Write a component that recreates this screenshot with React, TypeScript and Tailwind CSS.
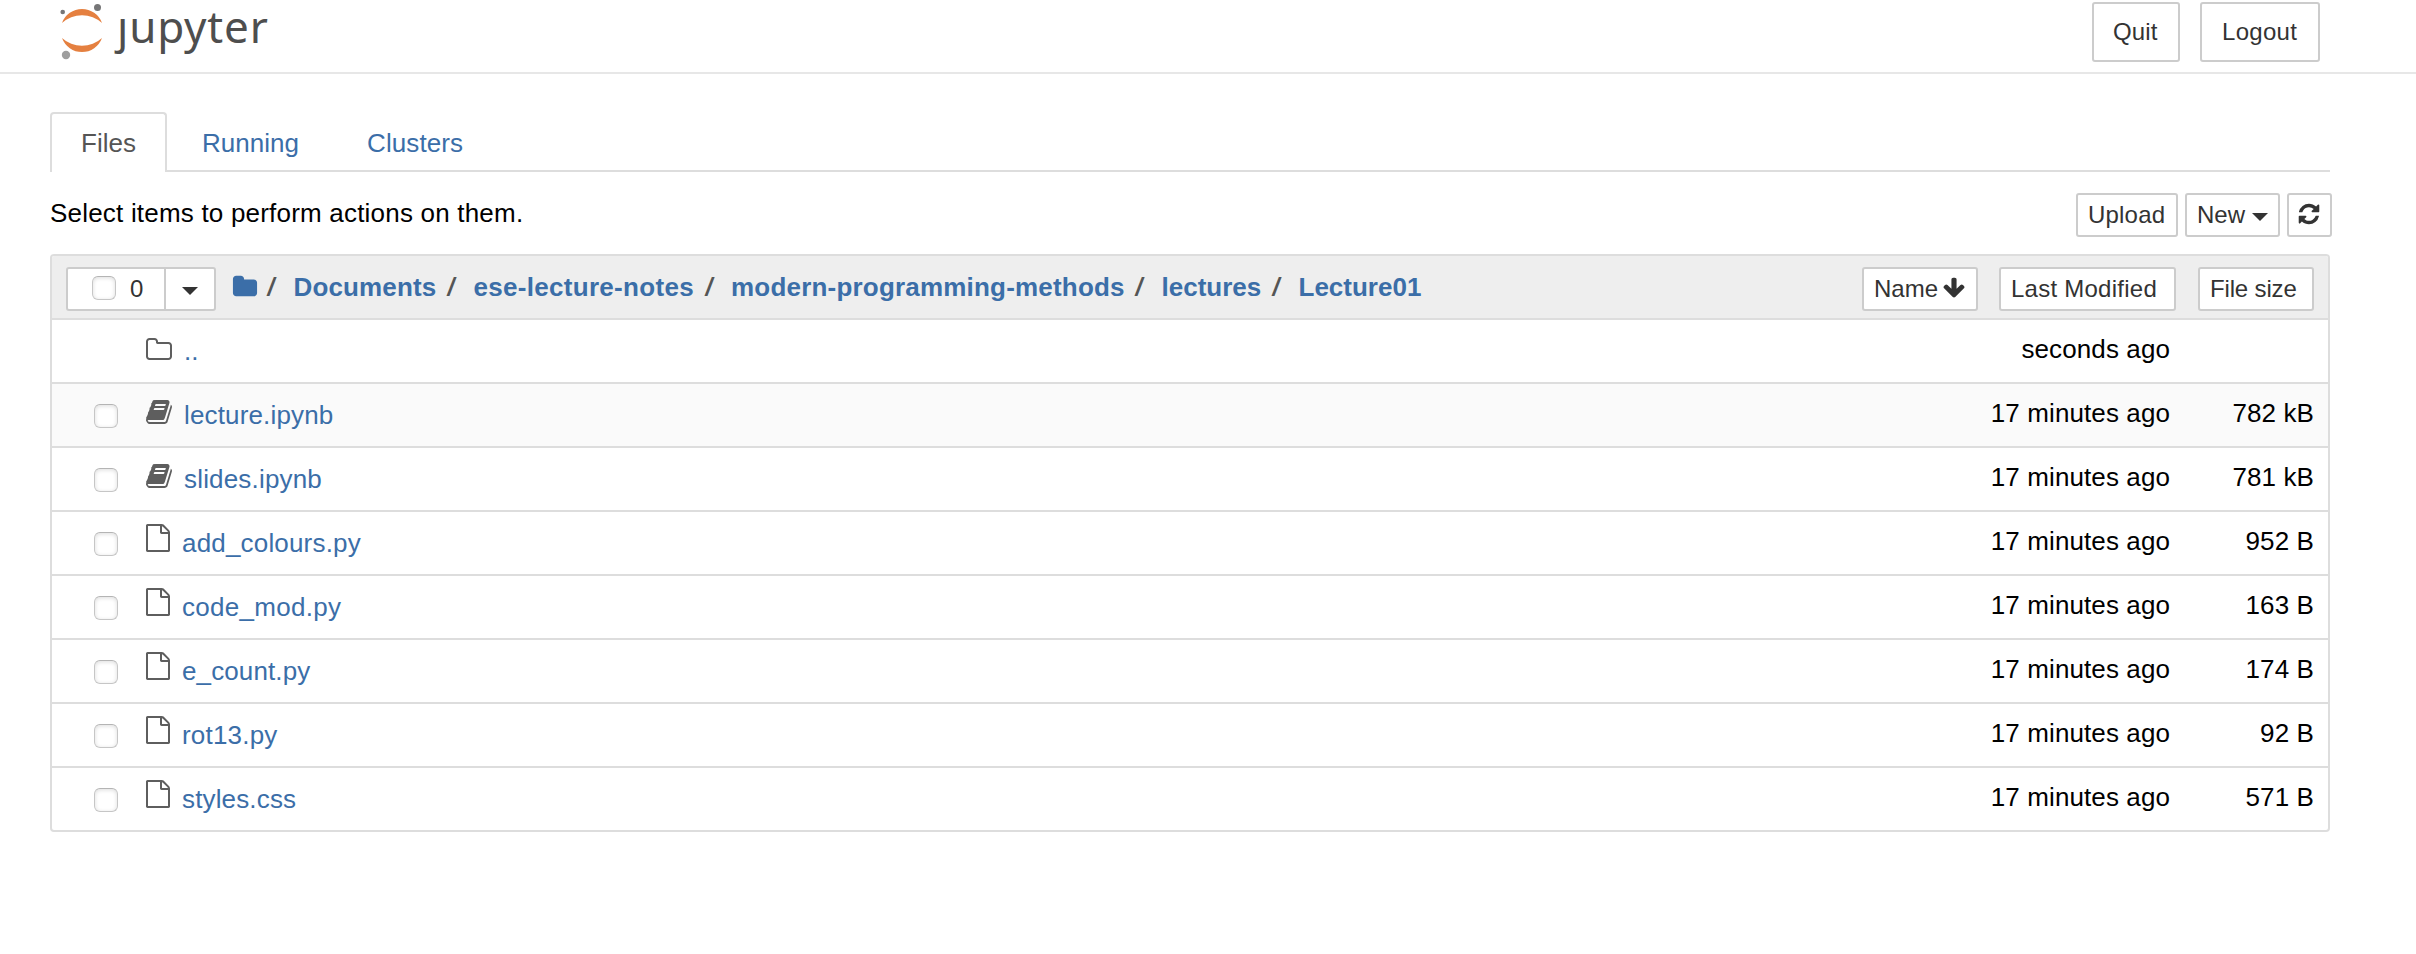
import type { ReactNode } from "react";

const ICONS = {
  folderOpen:
    "M1600 1312v-704q0-40-28-68t-68-28h-704q-40 0-68-28t-28-68v-64q0-40-28-68t-68-28h-320q-40 0-68 28t-28 68v960q0 40 28 68t68 28h1216q40 0 68-28t28-68zm128-704v704q0 92-66 158t-158 66h-1216q-92 0-158-66t-66-158v-960q0-92 66-158t158-66h320q92 0 158 66t66 158v32h672q92 0 158 66t66 158z",
  folder:
    "M1728 608v704q0 92-66 158t-158 66h-1216q-92 0-158-66t-66-158v-960q0-92 66-158t158-66h320q92 0 158 66t66 158v32h672q92 0 158 66t66 158z",
  refresh:
    "M1639 1056q0 5-1 7-64 268-268 434.5t-478 166.5q-146 0-282.5-55t-243.5-157l-129 129q-19 19-45 19t-45-19-19-45v-448q0-26 19-45t45-19h448q26 0 45 19t19 45-19 45l-137 137q71 66 161 102t187 36q134 0 250-65t186-179q11-17 53-117 8-23 30-23h192q13 0 22.5 9.5t9.5 22.5zm25-800v448q0 26-19 45t-45 19h-448q-26 0-45-19t-19-45 19-45l138-138q-148-137-349-137-134 0-250 65t-186 179q-11 17-53 117-8 23-30 23h-199q-13 0-22.5-9.5t-9.5-22.5v-7q65-268 270-434.5t480-166.5q146 0 284 55.5t245 156.5l130-129q19-19 45-19t45 19 19 45z",
  arrowDown:
    "M1675 832q0 53-37 90l-651 652q-39 37-91 37-53 0-90-37l-651-652q-38-36-38-90 0-53 38-91l74-75q39-37 91-37 53 0 90 37l294 294v-704q0-52 38-90t90-38h128q52 0 90 38t38 90v704l294-294q37-37 90-37 52 0 91 37l75 75q37 39 37 91z",
  file: "M1596 380q28 28 48 76t20 88v1152q0 40-28 68t-68 28h-1344q-40 0-68-28t-28-68v-1600q0-40 28-68t68-28h896q40 0 88 20t76 48zm-444-244v376h376q-10-29-22-41l-313-313q-12-12-41-22zm384 1528v-1024h-416q-40 0-68-28t-28-68v-416h-768v1536h1280z",
  book: "M1703 478q40 57 18 129l-275 906q-19 64-76.5 107.5t-122.5 43.5h-923q-77 0-148.5-53.5t-99.5-131.5q-24-67-2-127 0-4 3-27t4-37q1-8-3-21.5t-3-19.5q2-11 8-21t16.5-23.5 16.5-23.5q23-38 45-91.5t30-91.5q3-10 .5-30t-.5-28q3-11 17-28t17-23q21-36 42-92t25-90q1-9-2.5-32t.5-28q4-13 22-30.5t22-22.5q19-26 42.5-84.5t27.5-96.5q1-8-3-25.5t-2-26.5q2-8 9-18t18-23 17-21q8-12 16.5-30.5t15-35 16-36 19.5-32 26.5-23.5 36-11.5 47.5 5.5l-1 3q38-9 51-9h761q74 0 114 56t18 130l-274 906q-36 119-71.5 153.5t-128.5 34.5h-869q-27 0-38 15-11 16-1 43 24 70 144 70h923q29 0 56-15.5t35-41.5l300-987q7-22 5-57 38 15 59 43zm-1064 2q-4 13 2 22.5t20 9.5h608q13 0 25.5-9.5t16.5-22.5l21-64q4-13-2-22.5t-20-9.5h-608q-13 0-25.5 9.5t-16.5 22.5zm-83 256q-4 13 2 22.5t20 9.5h608q13 0 25.5-9.5t16.5-22.5l21-64q4-13-2-22.5t-20-9.5h-608q-13 0-25.5 9.5t-16.5 22.5z",
};

function Icon({ name, className }: { name: keyof typeof ICONS; className: string }) {
  return (
    <svg viewBox="0 0 1792 1792" fill="currentColor" className={`block shrink-0 ${className}`}>
      <path d={ICONS[name]} />
    </svg>
  );
}

function Caret({ className }: { className: string }) {
  return (
    <svg viewBox="0 0 16 8" fill="currentColor" className={`block h-2 w-4 shrink-0 ${className}`}>
      <path d="M0 0h16L8 8z" />
    </svg>
  );
}

function Checkbox({ className }: { className: string }) {
  return (
    <span
      className={`block size-6 shrink-0 rounded-[6px] border border-[#c6c6c6] border-t-[#b4b4b4] bg-white shadow-[inset_0_1px_4px_rgba(0,0,0,0.14)] ${className}`}
    />
  );
}

function Button({ className, children }: { className: string; children: ReactNode }) {
  return (
    <button
      className={`flex shrink-0 rounded-[3px] border-2 border-[#ccc] bg-white text-left text-[24px] whitespace-nowrap text-[#333] ${className}`}
    >
      {children}
    </button>
  );
}

const CRUMBS = [
  { label: "Documents", className: "w-[144.5px] tracking-[0.15px]" },
  { label: "ese-lecture-notes", className: "w-[222px] tracking-[0.3px]" },
  { label: "modern-programming-methods", className: "w-[395px] tracking-[0.2px]" },
  { label: "lectures", className: "w-[101.5px]" },
  { label: "Lecture01", className: "w-[130px]" },
];

type Row = { kind: "up" | "book" | "file"; name: string; tracking: string; age: string; size: string };

const AGE = "17 minutes ago";
const ROWS: Row[] = [
  { kind: "up", name: "..", tracking: "", age: "seconds ago", size: "" },
  { kind: "book", name: "lecture.ipynb", tracking: "tracking-[0.15px]", age: AGE, size: "782 kB" },
  { kind: "book", name: "slides.ipynb", tracking: "tracking-[0.18px]", age: AGE, size: "781 kB" },
  { kind: "file", name: "add_colours.py", tracking: "tracking-[0.18px]", age: AGE, size: "952 B" },
  { kind: "file", name: "code_mod.py", tracking: "tracking-[0.28px]", age: AGE, size: "163 B" },
  { kind: "file", name: "e_count.py", tracking: "tracking-[0.12px]", age: AGE, size: "174 B" },
  { kind: "file", name: "rot13.py", tracking: "tracking-[0.2px]", age: AGE, size: "92 B" },
  { kind: "file", name: "styles.css", tracking: "tracking-[0.15px]", age: AGE, size: "571 B" },
];

function FileRow({ row }: { row: Row }) {
  return (
    <li
      className={`flex h-16 items-start border-t-2 border-[#ddd] pr-[14px] text-[26px] ${row.name === "lecture.ipynb" ? "bg-[#fafafa]" : ""}`}
    >
      <div className="w-[92px] shrink-0 pt-5 pl-[42px]">{row.kind !== "up" && <Checkbox className="" />}</div>
      <div className="flex w-10 shrink-0 text-[#5e5e5e]">
        {row.kind === "up" && <Icon name="folderOpen" className="mt-4 ml-px size-7" />}
        {row.kind === "book" && <Icon name="book" className="mt-3.5 ml-px size-7" />}
        {row.kind === "file" && <Icon name="file" className="mt-3 size-7" />}
      </div>
      <a className={`grow leading-[63px] text-[#3b6ea8] ${row.kind === "file" ? "-ml-[2px]" : ""} ${row.tracking}`}>
        {row.name}
      </a>
      <span className="leading-[58px] tracking-[0.1px] text-black">{row.age}</span>
      <span className="w-36 text-right leading-[58px] tracking-[0.1px] text-black">{row.size}</span>
    </li>
  );
}

export default function App() {
  return (
    <div className="flex h-[954px] w-[2416px] flex-col overflow-hidden bg-white font-['Liberation_Sans',Arial,sans-serif]">
      <header className="flex h-[74px] shrink-0 items-start border-b-2 border-[#e7e7e7] pr-24 pl-[58px]">
        <svg viewBox="0 0 48 64" className="block h-16 w-12 shrink-0">
          <path d="M4 23A21.300 21.300 0 0 1 44 23A29.500 29.500 0 0 0 4 23z" fill="#e58040" />
          <path d="M4 38A21.300 21.300 0 0 0 44 38A29.500 29.500 0 0 1 4 38z" fill="#e58040" />
          <circle cx="39.500" cy="7.500" r="3.500" fill="#767677" />
          <circle cx="4.700" cy="12" r="2.300" fill="#767677" />
          <circle cx="8" cy="55" r="4.200" fill="#9e9e9e" />
        </svg>
        <span className="ml-[11px] grow text-[44px] leading-[52px] tracking-[0.8px] text-[#4e4e4e] font-['Noto_Sans',sans-serif]">
          ȷupyter
        </span>
        <div className="flex gap-5 pt-0.5">
          <Button className="h-[60px] w-22 pl-[19px] leading-[56px] tracking-[0.1px]">Quit</Button>
          <Button className="h-[60px] w-[120px] pl-[20px] leading-[56px] tracking-[0.3px]">Logout</Button>
        </div>
      </header>

      <main className="mr-[84px] ml-[50px] flex flex-col">
        <nav className="mt-[38px] mr-[2px] flex h-[60px] text-[26px] leading-[62px] text-[#3b6ea8]">
          <a className="w-[117px] rounded-t-[4px] border-2 border-b-0 border-[#ddd] pl-[29px] leading-[58px] text-[#555]">
            Files
          </a>
          <a className="w-[164px] border-b-2 border-[#ddd] pl-[35px]">Running</a>
          <a className="grow border-b-2 border-[#ddd] pl-[36px] tracking-[0.1px]">Clusters</a>
        </nav>

        <div className="flex h-[82px] items-start">
          <p className="grow text-[26px] leading-[82px] tracking-[0.2px] text-black">
            Select items to perform actions on them.
          </p>
          <div className="flex gap-[7px] pt-[21px]">
            <Button className="h-11 w-[102px] pl-[10px] leading-[39px] tracking-[0.2px]">Upload</Button>
            <Button className="h-11 w-[95px] pl-[10px] leading-[39px]">
              New
              <Caret className="mt-[18px] ml-[7px]" />
            </Button>
            <Button className="h-11 w-[45px] pl-[8px]">
              <Icon name="refresh" className="mt-[7px] size-6" />
            </Button>
          </div>
        </div>

        <section className="mr-[2px] flex flex-col rounded-[4px] border-2 border-[#ddd]">
          <div className="flex h-[62px] items-start rounded-t-[2px] bg-[#eee] pr-[14px] pl-[14px]">
            <div className="mt-[11px] flex h-11 w-[150px] shrink-0 rounded-[3px] border-2 border-[#ccc] bg-white text-[24px] leading-[39px] text-[#333]">
              <Checkbox className="mt-[7px] ml-6" />
              <span className="ml-[14px] w-[34px]">0</span>
              <span className="flex border-l-2 border-[#ccc]">
                <Caret className="mt-[18px] ml-4" />
              </span>
            </div>
            <Icon name="folder" className="mt-[18px] ml-4 size-[26px] text-[#3b6ea8]" />
            <div className="flex text-[26px] leading-[62px] font-bold text-[#3b6ea8]">
              {CRUMBS.map((c) => (
                <span key={c.label} className="flex">
                  <span className="ml-[10px] w-[7px] origin-center scale-x-140 font-normal text-[#555]">/</span>
                  <a className={`ml-[18.5px] whitespace-nowrap ${c.className}`}>{c.label}</a>
                </span>
              ))}
            </div>
            <div className="mt-[11px] ml-auto flex">
              <Button className="h-11 w-[116px] pl-[10px] leading-[39px]">
                Name
                <Icon name="arrowDown" className="mt-[7px] ml-[4px] size-6" />
              </Button>
              <Button className="ml-[21px] h-11 w-[177px] pl-[10px] leading-[39px] tracking-[0.25px]">
                Last Modified
              </Button>
              <Button className="ml-[22px] h-11 w-[116px] pl-[10px] leading-[39px] -tracking-[0.15px]">File size</Button>
            </div>
          </div>
          <ul className="flex flex-col">
            {ROWS.map((row) => (
              <FileRow key={row.name} row={row} />
            ))}
          </ul>
        </section>
      </main>
    </div>
  );
}
